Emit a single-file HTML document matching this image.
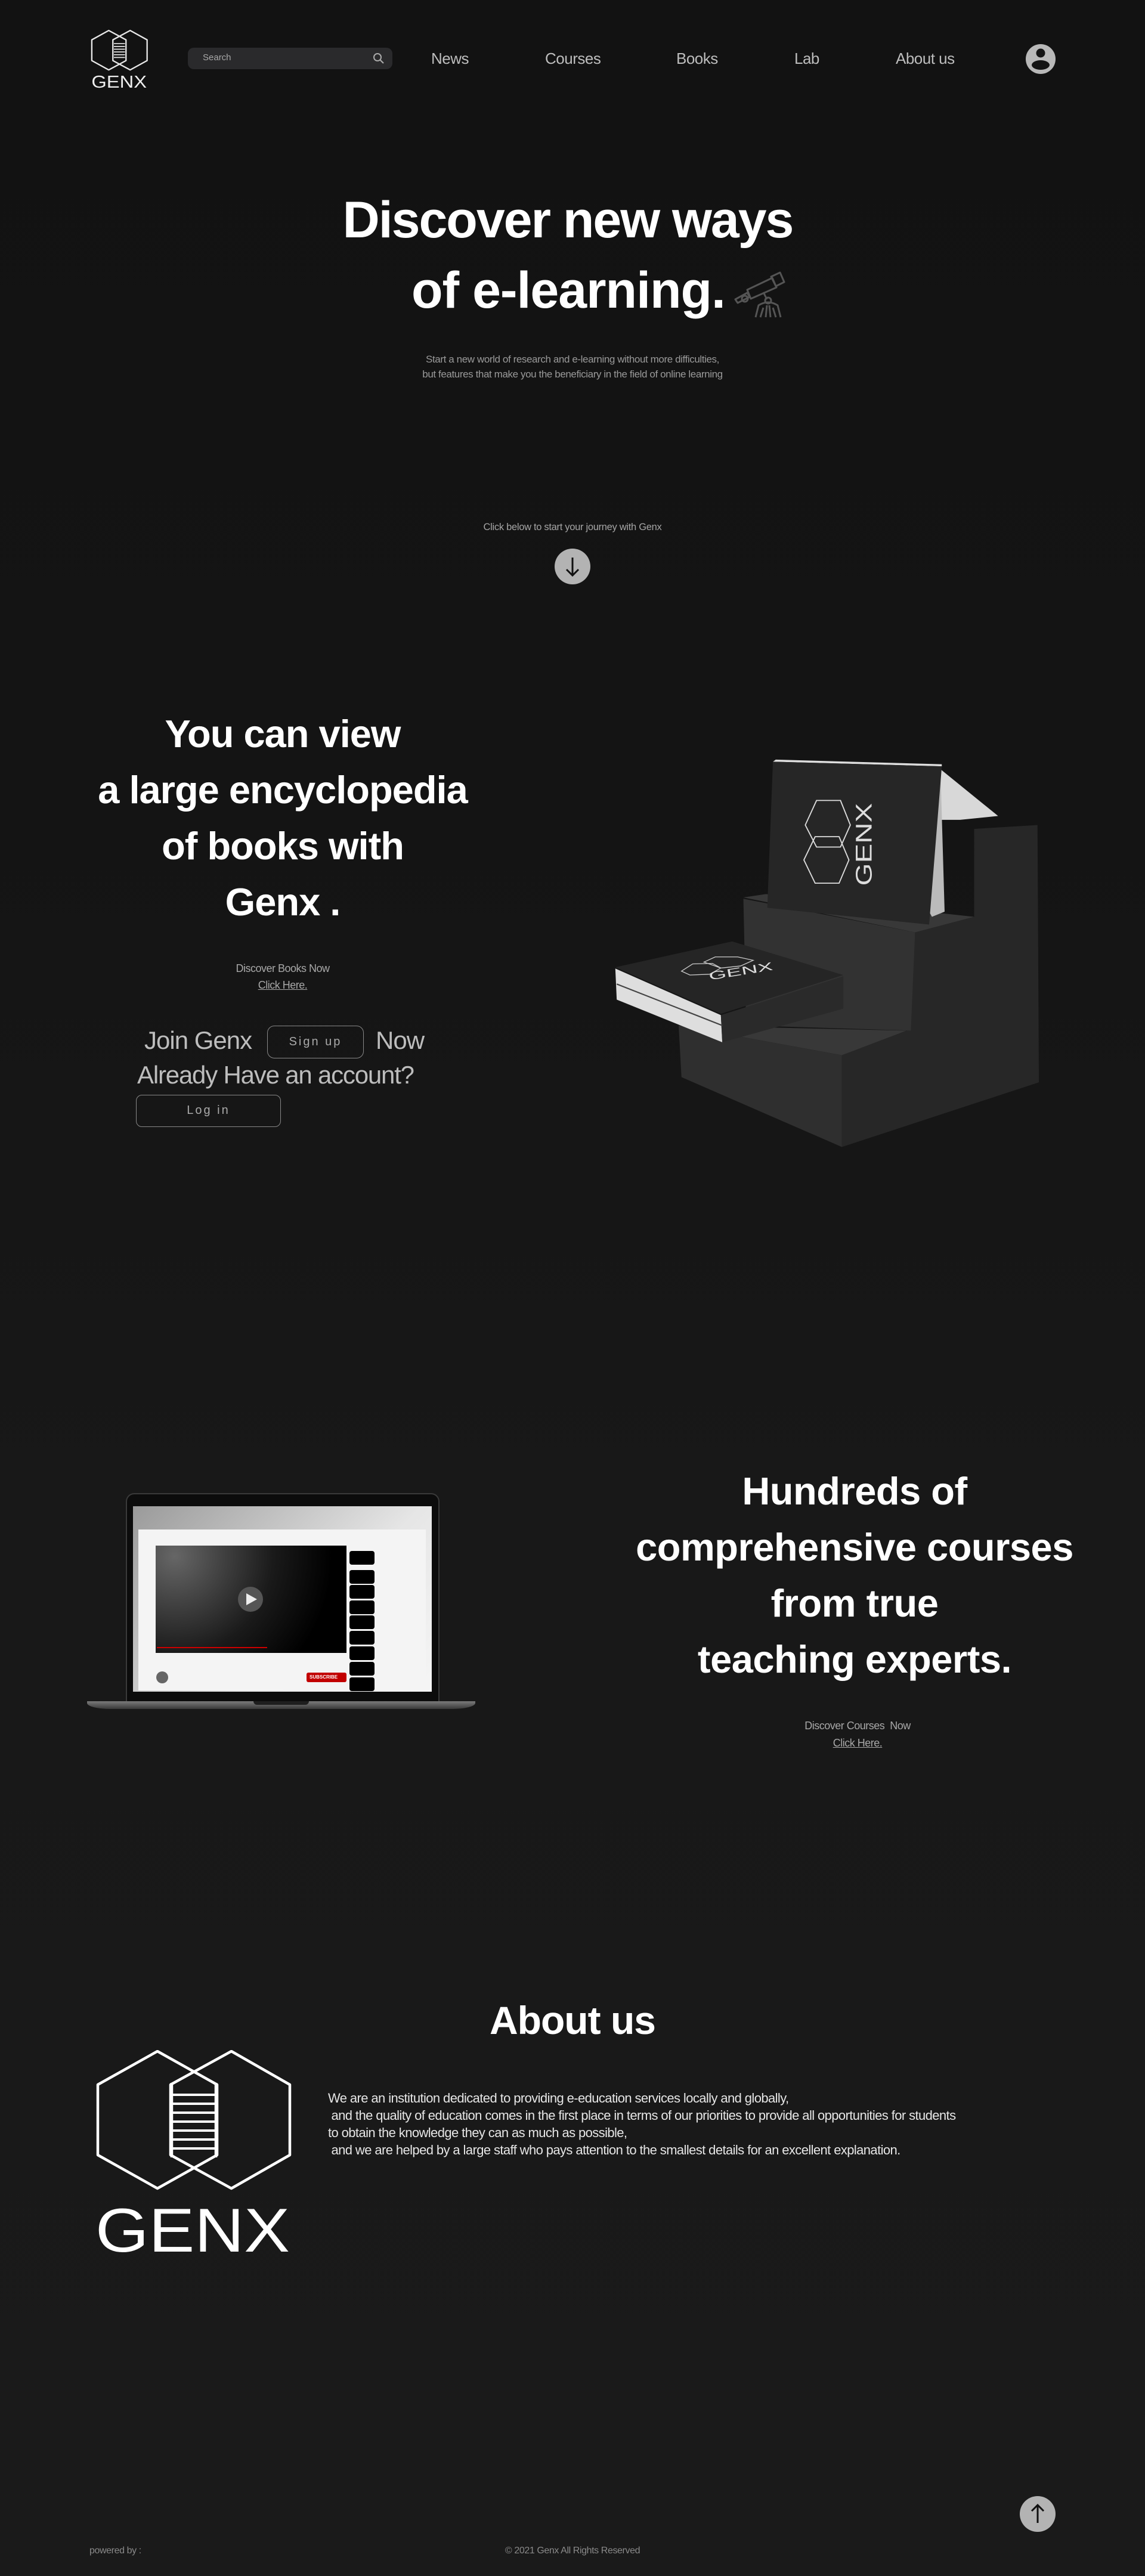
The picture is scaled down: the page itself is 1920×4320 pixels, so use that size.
<!DOCTYPE html>
<html><head><meta charset="utf-8">
<style>
*{margin:0;padding:0;box-sizing:border-box}
html,body{width:1920px;height:4320px;overflow:hidden}
body{position:relative;background:linear-gradient(#121212 0%,#141414 30%,#181818 60%,#1a1a1a 100%);font-family:"Liberation Sans",sans-serif;color:#fff}
.a{position:absolute}
.c{position:absolute;text-align:center;white-space:nowrap}
.nav{position:absolute;top:83px;font-size:26px;color:#bdbdbd;letter-spacing:-0.5px}
</style></head><body>

<svg class="a" style="left:152px;top:50px" width="96" height="100" viewBox="0 0 330 345">
<g fill="none" stroke="#e8e8e8" stroke-width="8" stroke-linejoin="round">
<polygon points="104,4 204,58 204,178 104,232 6,178 6,58"/>
<polygon points="228,4 326,58 326,178 228,232 128,178 128,58"/>
</g>
<g stroke="#e8e8e8" stroke-width="6">
<line x1="134" y1="80" x2="198" y2="80"/><line x1="134" y1="96" x2="198" y2="96"/><line x1="134" y1="112" x2="198" y2="112"/><line x1="134" y1="128" x2="198" y2="128"/><line x1="134" y1="144" x2="198" y2="144"/><line x1="134" y1="160" x2="198" y2="160"/>
</g>
<text x="4" y="335" font-family="Liberation Sans" font-size="100" fill="#eee" textLength="320" lengthAdjust="spacingAndGlyphs">GENX</text>
</svg>

<div class="a" style="left:315px;top:80px;width:343px;height:36px;background:#2a2a2c;border-radius:10px"></div>
<div class="a" style="left:340px;top:88px;font-size:15px;color:#a8a8a8">Search</div>
<svg class="a" style="left:624px;top:87px" width="22" height="22" viewBox="0 0 22 22"><circle cx="9" cy="9" r="6" fill="none" stroke="#aaa" stroke-width="2"/><line x1="13.5" y1="13.5" x2="19" y2="19" stroke="#aaa" stroke-width="2.2"/></svg>

<div class="nav" style="left:723px">News</div>
<div class="nav" style="left:914px">Courses</div>
<div class="nav" style="left:1134px">Books</div>
<div class="nav" style="left:1332px">Lab</div>
<div class="nav" style="left:1502px">About us</div>
<svg class="a" style="left:1720px;top:74px" width="50" height="50" viewBox="0 0 50 50"><circle cx="25" cy="25" r="25" fill="#b8b8b8"/><circle cx="25" cy="15" r="7.5" fill="#141414"/><ellipse cx="25" cy="35" rx="15" ry="8" fill="#141414"/></svg>

<div class="c" style="left:-8px;width:1920px;top:310px;font-size:86px;font-weight:bold;letter-spacing:-2px;line-height:118px">Discover new ways</div>
<div class="c" style="left:690px;width:560px;top:428px;font-size:86px;font-weight:bold;letter-spacing:-1px;line-height:118px;text-align:left">of e-learning.</div>
<svg class="a" style="left:1220px;top:440px" width="120" height="110" viewBox="0 0 120 110" fill="none" stroke="#555" stroke-width="3" stroke-linejoin="round">
<polygon points="13,62 33,51 37,58 17,68"/>
<polygon points="33,46 75,26 82,42 39,61"/>
<polygon points="73,24 88,17 95,33 81,40"/>
<circle cx="29" cy="61" r="5"/>
<line x1="60" y1="50" x2="66" y2="62"/>
<circle cx="68" cy="64" r="5"/>
<path d="M47,92 L52,72 Q68,62 84,72 L89,92 M55,92 L60,76 M81,92 L76,76 M64,92 L66,72 M72,92 L70,72"/>
</svg>
<div class="c" style="left:0;width:1920px;top:590px;font-size:17px;color:#9a9a9a;line-height:25px;letter-spacing:-0.4px">Start a new world of research and e-learning without more difficulties,<br>but features that make you the beneficiary in the field of online learning</div>

<div class="c" style="left:0;width:1920px;top:875px;font-size:16.5px;color:#a5a5a5;letter-spacing:-0.3px">Click below to start your journey with Genx</div>
<svg class="a" style="left:930px;top:920px" width="60" height="60" viewBox="0 0 60 60"><circle cx="30" cy="30" r="30" fill="#b3b3b3"/><path d="M30,15 V45 M20,35 L30,45 L40,35" fill="none" stroke="#111" stroke-width="3"/></svg>

<div class="c" style="left:74px;width:800px;top:1184px;font-size:65px;font-weight:bold;line-height:94px;letter-spacing:-1px">You can view<br>a large encyclopedia<br>of books with<br>Genx .</div>
<div class="c" style="left:274px;width:400px;top:1610px;font-size:18px;color:#a8a8a8;line-height:28px;letter-spacing:-0.5px">Discover Books Now<br><span style="text-decoration:underline">Click Here.</span></div>
<div class="a" style="left:242px;top:1721px;font-size:42px;color:#bdbdbd;letter-spacing:-1px">Join Genx</div>
<div class="a" style="left:448px;top:1720px;width:162px;height:55px;border:1.5px solid #888;border-radius:12px;color:#aaa;font-size:20px;letter-spacing:3px;text-align:center;line-height:52px">Sign up</div>
<div class="a" style="left:630px;top:1721px;font-size:42px;color:#bdbdbd;letter-spacing:-1px">Now</div>
<div class="a" style="left:230px;top:1779px;font-size:42px;color:#bdbdbd;letter-spacing:-1.2px">Already Have an account?</div>
<div class="a" style="left:228px;top:1836px;width:243px;height:54px;border:1.5px solid #888;border-radius:10px;color:#aaa;font-size:20px;letter-spacing:3px;text-align:center;line-height:51px">Log in</div>

<svg class="a" style="left:1020px;top:1260px" width="740" height="680" viewBox="0 0 1568 1568" preserveAspectRatio="none">
<polygon points="1090,700 1300,640 1300,300 1525,285 1530,1280 830,1530 830,1175 1060,1080" fill="#272727"/>
<polygon points="480,565 560,552 1300,640 1090,700" fill="#383838"/>
<polygon points="480,570 1090,700 1075,1080 490,1060" fill="#323232"/>
<polygon points="250,1060 1060,1080 830,1175" fill="#383838"/>
<polygon points="250,1060 830,1175 830,1530 260,1260" fill="#2f2f2f"/>
<polygon points="1170,60 1385,250 1250,265 1180,265" fill="#d8d8d8"/>
<polygon points="1140,620 1180,60 1195,620 1150,640" fill="#bbb"/>
<polygon points="595,32 1185,50 1185,58 585,40" fill="#ddd"/>
<polygon points="585,40 1185,58 1140,670 565,605" fill="#262626"/>
<g fill="none" stroke="#ddd" stroke-width="4">
<polygon points="740,190 825,190 860,285 825,370 740,370 700,285"/>
<polygon points="735,330 820,330 855,420 820,510 735,510 695,420"/>
</g>
<text x="0" y="0" transform="translate(935,520) rotate(-90)" font-family="Liberation Sans" font-size="80" fill="#ddd" textLength="320" lengthAdjust="spacingAndGlyphs">GENX</text>
<polygon points="25,840 400,1020 405,1125 30,960" fill="#dedede"/>
<polygon points="400,1020 835,870 835,995 405,1125" fill="#2a2a2a"/>
<polygon points="25,835 440,735 835,865 400,1015" fill="#252525"/>
<line x1="30" y1="900" x2="405" y2="1060" stroke="#444" stroke-width="5"/>
<g fill="none" stroke="#ccc" stroke-width="3">
<polygon points="260,850 300,822 370,820 400,838 360,862 290,865"/>
<polygon points="340,815 380,795 460,795 515,808 470,830 400,838"/>
</g>
<text x="0" y="0" transform="translate(360,885) rotate(-10)" font-family="Liberation Sans" font-size="44" fill="#ddd" textLength="230" lengthAdjust="spacingAndGlyphs">GENX</text>
</svg>

<div class="a" style="left:211px;top:2504px;width:526px;height:352px;background:#0c0c0c;border:2px solid #3a3a3a;border-radius:14px 14px 0 0"></div>
<div class="a" style="left:223px;top:2526px;width:501px;height:311px;background:linear-gradient(135deg,#9a9a9a,#e6e6e6 60%,#f5f5f5)"></div>
<div class="a" style="left:232px;top:2565px;width:482px;height:270px;background:#f4f4f4"></div>
<div class="a" style="left:261px;top:2592px;width:320px;height:180px;background:radial-gradient(circle at 10% 10%,#666,#1a1a1a 50%,#000 80%)"></div>
<div class="a" style="left:399px;top:2661px;width:42px;height:42px;border-radius:50%;background:#555"></div>
<div class="a" style="left:413px;top:2672px;width:0;height:0;border-left:18px solid #eee;border-top:10px solid transparent;border-bottom:10px solid transparent"></div>
<div class="a" style="left:263px;top:2762px;width:185px;height:2px;background:#c00"></div>
<div class="a" style="left:586px;top:2601px;width:42px;height:23px;background:#000;border-radius:4px;box-shadow:0 32px 0 #000,0 57px 0 #000,0 83px 0 #000,0 108px 0 #000,0 134px 0 #000,0 160px 0 #000,0 186px 0 #000,0 212px 0 #000"></div>
<div class="a" style="left:514px;top:2805px;width:67px;height:16px;background:#c20000;border-radius:3px;color:#fff;font-size:8px;font-weight:bold;line-height:16px;padding-left:5px">SUBSCRIBE</div>
<div class="a" style="left:262px;top:2803px;width:20px;height:20px;border-radius:50%;background:#666"></div>
<div class="a" style="left:146px;top:2853px;width:651px;height:13px;background:linear-gradient(#7a7a7a,#3a3a3a);border-radius:0 0 40px 40px / 0 0 10px 10px"></div>
<div class="a" style="left:425px;top:2853px;width:93px;height:6px;background:#1e1e1e;border-radius:0 0 6px 6px"></div>

<div class="c" style="left:1033px;width:800px;top:2454px;font-size:65px;font-weight:bold;line-height:94px;letter-spacing:-0.5px">Hundreds of<br>comprehensive courses<br>from true<br>teaching experts.</div>
<div class="c" style="left:1238px;width:400px;top:2880px;font-size:18px;color:#a8a8a8;line-height:29px;letter-spacing:-0.5px">Discover Courses&nbsp; Now<br><span style="text-decoration:underline">Click Here.</span></div>

<div class="c" style="left:0;width:1920px;top:3350px;font-size:66px;font-weight:bold;letter-spacing:-1px">About us</div>
<svg class="a" style="left:160px;top:3438px" width="330" height="345" viewBox="0 0 330 345">
<g fill="none" stroke="#fff" stroke-width="4.5" stroke-linejoin="round">
<polygon points="104,2 204,58 204,176 104,232 4,176 4,58"/>
<polygon points="228,2 326,58 326,176 228,232 126,176 126,58"/>
<line x1="128" y1="55" x2="128" y2="180"/><line x1="202" y1="55" x2="202" y2="180"/>
</g>
<g stroke="#fff" stroke-width="4">
<line x1="128" y1="75" x2="202" y2="75"/><line x1="128" y1="90" x2="202" y2="90"/><line x1="128" y1="105" x2="202" y2="105"/><line x1="128" y1="120" x2="202" y2="120"/><line x1="128" y1="135" x2="202" y2="135"/><line x1="128" y1="150" x2="202" y2="150"/><line x1="128" y1="165" x2="202" y2="165"/>
</g>
<text x="0" y="338" font-family="Liberation Sans" font-size="104" fill="#fff" textLength="326" lengthAdjust="spacingAndGlyphs">GENX</text>
</svg>
<div class="a" style="left:550px;top:3504px;font-size:22px;color:#e6e6e6;line-height:29px;white-space:pre;letter-spacing:-0.6px">We are an institution dedicated to providing e-education services locally and globally,
 and the quality of education comes in the first place in terms of our priorities to provide all opportunities for students
to obtain the knowledge they can as much as possible,
 and we are helped by a large staff who pays attention to the smallest details for an excellent explanation.</div>

<svg class="a" style="left:1710px;top:4186px" width="60" height="60" viewBox="0 0 60 60"><circle cx="30" cy="30" r="30" fill="#b3b3b3"/><path d="M30,45 V15 M20,25 L30,15 L40,25" fill="none" stroke="#111" stroke-width="3"/></svg>
<div class="a" style="left:150px;top:4269px;font-size:16px;color:#8a8a8a;letter-spacing:-0.4px">powered by :</div>
<div class="c" style="left:0;width:1920px;top:4269px;font-size:16px;color:#8a8a8a;letter-spacing:-0.4px">© 2021 Genx All Rights Reserved</div>
</body></html>
